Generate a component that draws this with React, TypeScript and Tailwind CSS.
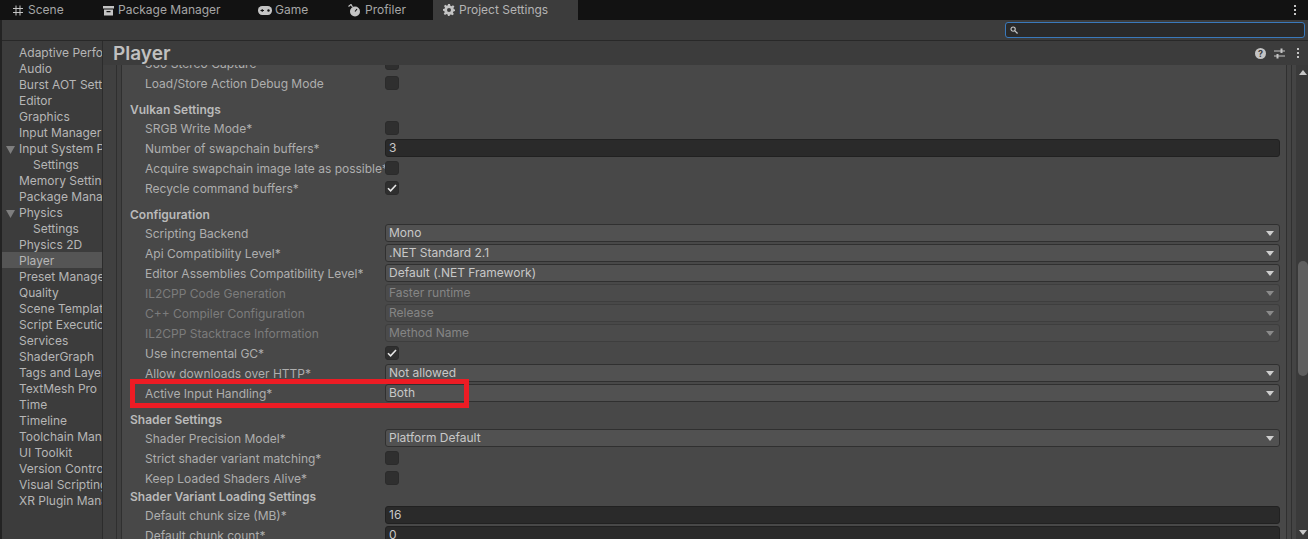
import React from "react";

const side: [string, number, boolean?, boolean?][] = [
  ["Adaptive Performance", 0],
  ["Audio", 0],
  ["Burst AOT Settings", 0],
  ["Editor", 0],
  ["Graphics", 0],
  ["Input Manager", 0],
  ["Input System Package", 0, true],
  ["Settings", 1],
  ["Memory Settings", 0],
  ["Package Manager", 0],
  ["Physics", 0, true],
  ["Settings", 1],
  ["Physics 2D", 0],
  ["Player", 0, false, true],
  ["Preset Manager", 0],
  ["Quality", 0],
  ["Scene Template", 0],
  ["Script Execution Order", 0],
  ["Services", 0],
  ["ShaderGraph", 0],
  ["Tags and Layers", 0],
  ["TextMesh Pro", 0],
  ["Time", 0],
  ["Timeline", 0],
  ["Toolchain Management", 0],
  ["UI Toolkit", 0],
  ["Version Control", 0],
  ["Visual Scripting", 0],
  ["XR Plugin Management", 0],
];

function Tri({ dim }: { dim?: boolean }) {
  return (
    <svg width="8" height="5" viewBox="0 0 8 5" className="absolute right-[5px] top-[6px]">
      <path d="M0 0H8L4 5Z" fill={dim ? "#8a8a8a" : "#cfcfcf"} />
    </svg>
  );
}

function Label({ text, dim }: { text: string; dim?: boolean }) {
  return (
    <div
      className={`ml-[23px] h-5 w-[240px] overflow-hidden whitespace-nowrap leading-[22px] ${
        dim ? "text-[#7c7c7c]" : "text-[#aeaeae]"
      }`}
    >
      {text}
    </div>
  );
}

function Check({ label, on }: { label: string; on?: boolean }) {
  return (
    <div className="flex h-5 items-center">
      <Label text={label} />
      <div className="flex h-[14px] w-[14px] items-center justify-center rounded-[3px] border border-[#2b2b2b] bg-[#2f2f2f]">
        {on && (
          <svg width="10" height="8" viewBox="0 0 10 8">
            <path d="M1 4.2L3.6 6.8L9 1" fill="none" stroke="#e6e6e6" strokeWidth="1.6" />
          </svg>
        )}
      </div>
    </div>
  );
}

function Input({ label, value }: { label: string; value: string }) {
  return (
    <div className="flex h-5 items-center">
      <Label text={label} />
      <div className="h-[18px] w-[895px] rounded-[3px] border border-[#212121] bg-[#2a2a2a] pl-[3px] leading-[16px] text-[#c8c8c8]">
        {value}
      </div>
    </div>
  );
}

function Select({ label, value, dim }: { label: string; value: string; dim?: boolean }) {
  return (
    <div className="flex h-5 items-center">
      <Label text={label} dim={dim} />
      <div
        className={`relative h-[18px] w-[895px] rounded-[3px] border pl-[3px] leading-[16px] ${
          dim
            ? "border-[#3e3e3e] bg-[#4b4b4b] text-[#858585]"
            : "border-[#303030] bg-[#515151] text-[#c8c8c8]"
        }`}
      >
        {value}
        <Tri dim={dim} />
      </div>
    </div>
  );
}

function Heading({ text, cls }: { text: string; cls: string }) {
  return <div className={`${cls} ml-[8px] font-semibold text-[#bababa]`}>{text}</div>;
}

function Dots() {
  return (
    <div className="flex flex-col gap-[2px]">
      <div className="h-[2px] w-[2px] bg-[#c4c4c4]" />
      <div className="h-[2px] w-[2px] bg-[#c4c4c4]" />
      <div className="h-[2px] w-[2px] bg-[#c4c4c4]" />
    </div>
  );
}

export default function App() {
  return (
    <div
      className="flex h-[539px] w-[1308px] flex-col overflow-hidden bg-[#3c3c3c] text-[12px]"
      style={{ fontFamily: "Inter, 'Liberation Sans', sans-serif" }}
    >
      {/* tab bar */}
      <div className="flex h-5 shrink-0 items-center bg-[#121212] text-[#a6a6a6]">
        <div className="flex h-5 w-[90px] items-center gap-[5px] pl-[13px]">
          <svg width="10" height="11" viewBox="0 0 10 11">
            <path d="M3 0.5V10.5M7 0.5V10.5M0 3.5H10M0 7.5H10" stroke="#c4c4c4" strokeWidth="1" fill="none" />
          </svg>
          Scene
        </div>
        <div className="flex h-5 w-[155px] items-center gap-[4px] pl-[13px]">
          <svg width="11" height="11" viewBox="0 0 11 11">
            <path d="M0 1H11V3.5H0ZM1 4.5H10V10.5H1ZM3.5 6V7.2H7.5V6Z" fill="#c4c4c4" fillRule="evenodd" />
          </svg>
          Package Manager
        </div>
        <div className="flex h-5 w-[90px] items-center gap-[3px] pl-[13px]">
          <svg width="14" height="9" viewBox="0 0 14 9">
            <rect x="0" y="0" width="14" height="9" rx="4.2" fill="#c4c4c4" />
            <path d="M2.5 4.5H6M4.2 3V6" stroke="#121212" strokeWidth="1" />
            <circle cx="10.5" cy="4.5" r="1.2" fill="#121212" />
          </svg>
          Game
        </div>
        <div className="flex h-5 w-[98px] items-center gap-[5px] pl-[13px]">
          <svg width="12" height="13" viewBox="0 0 12 13">
            <circle cx="7" cy="7.5" r="5" fill="#c4c4c4" />
            <path d="M7 7.5L9 5" stroke="#121212" strokeWidth="1.2" />
            <path d="M0.5 2.5L3 0.5L4.5 3" stroke="#c4c4c4" strokeWidth="1.2" fill="none" />
          </svg>
          Profiler
        </div>
        <div className="flex h-5 w-[145px] items-center gap-[4px] bg-[#3c3c3c] pl-[10px] text-[#b4b4b4]">
          <svg width="12" height="12" viewBox="0 0 24 24">
            <path
              fillRule="evenodd"
              fill="#c4c4c4"
              d="M10 0H14L14.7 3.4L17 4.4L20 2.4L22.8 5.2L20.8 8.2L21.7 10.4L24 11V14L20.8 14.9L19.8 17.1L21.7 20L19 22.7L16 20.8L13.8 21.7L13.2 24H10L9.2 21L7 20L4 22L1.4 19.4L3.4 16.4L2.4 14L0 13.4V10L3 9.4L4 7L2 4L4.6 1.4L7.6 3.4L9.6 2.6ZM12 8A4 4 0 1 0 12 16A4 4 0 1 0 12 8Z"
            />
          </svg>
          Project Settings
        </div>
        <div className="ml-auto mr-[12px]">
          <Dots />
        </div>
      </div>

      <div className="flex min-h-0 flex-1 flex-col border-l-2 border-[#232323]">
        {/* search toolbar */}
        <div className="flex h-[21px] shrink-0 items-center justify-end border-b border-[#282828] bg-[#3c3c3c] pr-[3px]">
          <div className="flex h-[16px] w-[300px] items-center rounded-[3px] border border-[#3a79bb] bg-[#2a2a2a] pl-[4px]">
            <svg width="8" height="8" viewBox="0 0 9 9">
              <circle cx="3.5" cy="3.5" r="2.4" stroke="#c4c4c4" strokeWidth="1.3" fill="none" />
              <path d="M5.5 5.5L8.5 8.5" stroke="#c4c4c4" strokeWidth="1.4" />
            </svg>
          </div>
        </div>

        <div className="flex min-h-0 flex-1">
          {/* sidebar */}
          <div className="w-[101px] shrink-0 overflow-hidden border-r border-[#2c2c2c] pt-[3px]">
            {side.map(([name, indent, open, sel], i) => (
              <div
                key={i}
                className={`relative h-4 overflow-hidden whitespace-nowrap leading-[18px] text-[#b6b6b6] ${
                  indent ? "pl-[31px]" : "pl-[17px]"
                } ${sel ? "bg-[#555555]" : ""}`}
              >
                {open && (
                  <svg width="9" height="8" viewBox="0 0 9 8" className="absolute left-[4px] top-[6px]">
                    <path d="M0 0H9L4.5 8Z" fill="#7e7e7e" />
                  </svg>
                )}
                {name}
              </div>
            ))}
          </div>

          {/* right pane */}
          <div className="flex min-w-0 flex-1 flex-col">
            <div className="flex h-[24px] shrink-0 items-center bg-[#3c3c3c] pl-[10px] pr-[9px]">
              <div className="h-6 text-[19px] leading-[26px] font-semibold text-[#c0c0c0]">Player</div>
              <div className="ml-auto flex items-center">
                <svg width="11" height="11" viewBox="0 0 11 11">
                  <circle cx="5.5" cy="5.5" r="5.5" fill="#c4c4c4" />
                  <text x="5.5" y="8.6" textAnchor="middle" fontSize="9" fontWeight="700" fill="#3c3c3c">?</text>
                </svg>
                <svg width="11" height="11" viewBox="0 0 11 11" className="ml-[8px] mr-[12px]">
                  <path d="M0 3H11M0 8H11" stroke="#c4c4c4" strokeWidth="1" />
                  <path d="M7.5 0.5V5M3.5 6V10.5" stroke="#c4c4c4" strokeWidth="2" />
                </svg>
                <Dots />
              </div>
            </div>

            <div className="flex min-h-0 flex-1">
              <div className="w-[14px] shrink-0 border-r border-[#2f2f2f] bg-[#404040]" />
              <div className="w-[5px] shrink-0 border-r border-[#303030] bg-[#404040]" />
              <div className="relative min-w-0 flex-1 overflow-hidden bg-[#484848]">
                <div className="-mt-3">
                  <Check label="360 Stereo Capture" />
                  <Check label="Load/Store Action Debug Mode" />
                  <Heading text="Vulkan Settings" cls="h-[25px] pt-[8px] leading-[18px]" />
                  <Check label="SRGB Write Mode*" />
                  <Input label="Number of swapchain buffers*" value="3" />
                  <Check label="Acquire swapchain image late as possible*" />
                  <Check label="Recycle command buffers*" on />
                  <Heading text="Configuration" cls="h-[25px] pt-[8px] leading-[18px]" />
                  <Select label="Scripting Backend" value="Mono" />
                  <Select label="Api Compatibility Level*" value=".NET Standard 2.1" />
                  <Select label="Editor Assemblies Compatibility Level*" value="Default (.NET Framework)" />
                  <Select label="IL2CPP Code Generation" value="Faster runtime" dim />
                  <Select label="C++ Compiler Configuration" value="Release" dim />
                  <Select label="IL2CPP Stacktrace Information" value="Method Name" dim />
                  <Check label="Use incremental GC*" on />
                  <Select label="Allow downloads over HTTP*" value="Not allowed" />
                  <Select label="Active Input Handling*" value="Both" />
                  <Heading text="Shader Settings" cls="h-[25px] pt-[8px] leading-[18px]" />
                  <Select label="Shader Precision Model*" value="Platform Default" />
                  <Check label="Strict shader variant matching*" />
                  <Check label="Keep Loaded Shaders Alive*" />
                  <Heading text="Shader Variant Loading Settings" cls="h-[17px] leading-[17px]" />
                  <Input label="Default chunk size (MB)*" value="16" />
                  <Input label="Default chunk count*" value="0" />
                </div>
                <div className="absolute left-[8px] top-[314px] h-[29px] w-[339px] border-[5px] border-[#ed1c24]" />
              </div>
              <div className="w-[6px] shrink-0 border-x border-[#303030] bg-[#444444]" />
              <div className="w-[4px] shrink-0 bg-[#444444]" />
              <div className="relative w-[12px] shrink-0 bg-[#3a3a3a]">
                <svg width="8" height="5" viewBox="0 0 8 5" className="absolute left-[3px] top-[5px]">
                  <path d="M4 0L8 5H0Z" fill="#c8c8c8" />
                </svg>
                <div className="absolute left-[2px] top-[196px] h-[115px] w-[10px] rounded-[5px] bg-[#5f5f5f]" />
                <svg width="8" height="5" viewBox="0 0 8 5" className="absolute left-[3px] top-[465px]">
                  <path d="M0 0H8L4 5Z" fill="#c8c8c8" />
                </svg>
              </div>
            </div>
          </div>
        </div>
      </div>
    </div>
  );
}
